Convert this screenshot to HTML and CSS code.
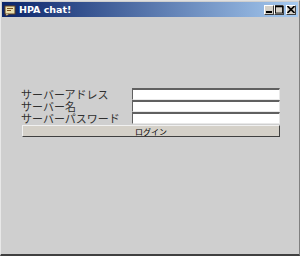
FILE: index.html
```html
<!DOCTYPE html>
<html lang="ja">
<head>
    <meta charset="UTF-8">
    <title>HPA chat!</title>
    <link rel="stylesheet" href="styles.css">
</head>
<body>

<div class="window">
    <div class="titlebar">
        <svg class="app-icon" width="12" height="12" viewBox="0 0 12 12">
            <rect x="1" y="2" width="10" height="8" fill="#e8e0b0" stroke="#604020"/>
            <rect x="3" y="4" width="6" height="1" fill="#805020"/>
            <rect x="3" y="6" width="4" height="1" fill="#805020"/>
            <path d="M2 10 L2 12 L5 10" fill="#fff" stroke="#604020" stroke-width="0.8"/>
        </svg>
        <span class="title">HPA chat!</span>
        <div class="caption-buttons">
            <button class="cap-btn">
                <svg width="8" height="7" viewBox="0 0 8 7"><rect x="1" y="5" width="6" height="2" fill="#000"/></svg>
            </button>
            <button class="cap-btn">
                <svg width="9" height="9" viewBox="0 0 9 9"><rect x="0.5" y="0.5" width="8" height="8" fill="none" stroke="#000"/><rect x="0" y="0" width="9" height="2" fill="#000"/></svg>
            </button>
            <button class="cap-btn close">
                <svg width="8" height="7" viewBox="0 0 8 7"><path d="M0.5 0 L7.5 7 M7.5 0 L0.5 7" stroke="#000" stroke-width="1.6"/></svg>
            </button>
        </div>
    </div>

    <div class="content">
        <div class="login-form">
            <label class="field-label" for="address">サーバーアドレス</label>
            <input class="field" type="text" id="address">
            <label class="field-label" for="server">サーバー名</label>
            <input class="field" type="text" id="server">
            <label class="field-label" for="password">サーバーパスワード</label>
            <input class="field" type="password" id="password">
            <button class="login-button">ログイン</button>
        </div>
    </div>
</div>

</body>
</html>
```

FILE: styles.css
```css
body {
    margin: 0;
    background-color: #d0d0d0;
    font-family: "Noto Sans CJK JP", "DejaVu Sans", sans-serif;
}

.window {
    width: 300px;
    height: 256px;
    box-sizing: border-box;
    border-top: 1px solid #e0e0e0;
    border-left: 1px solid #e8e8e8;
    border-right: 1px solid #808080;
    border-bottom: 2px solid #404040;
    background-color: #cfcfcf;
    display: flex;
    flex-direction: column;
    padding: 1px;
}

.titlebar {
    height: 15px;
    background: linear-gradient(to right, #0a246a, #a6caf0);
    display: flex;
    align-items: center;
    padding: 0 2px;
}

.app-icon {
    margin-right: 3px;
}

.title {
    color: #fff;
    font-family: "DejaVu Sans", sans-serif;
    font-weight: bold;
    font-size: 9.5px;
}

.caption-buttons {
    margin-left: auto;
    display: flex;
}

.cap-btn {
    width: 10px;
    height: 10px;
    padding: 0;
    background-color: #d4d0c8;
    border: 1px solid;
    border-color: #fff #404040 #404040 #fff;
    display: flex;
    align-items: center;
    justify-content: center;
}

.cap-btn.close {
    margin-left: 2px;
}

.content {
    flex: 1;
    padding-top: 71px;
    padding-left: 19px;
}

.login-form {
    display: grid;
    grid-template-columns: 111px 148px;
    grid-auto-rows: 12px;
}

.field-label {
    font-size: 11px;
    line-height: 12px;
    color: #303030;
    white-space: nowrap;
}

.field {
    height: 12px;
    box-sizing: border-box;
    margin: 0;
    padding: 0;
    background: #fff;
    border: 1px solid;
    border-color: #606060 #e8e8e8 #e8e8e8 #606060;
    border-top-width: 2px;
}

.login-button {
    grid-column: 1 / 3;
    height: 12px;
    margin: 1px 0 0 1px;
    padding: 0;
    background-color: #d4d0c8;
    border: 1px solid;
    border-color: #f0f0f0 #404040 #404040 #f0f0f0;
    font-family: "Noto Sans CJK JP", sans-serif;
    font-size: 8px;
    line-height: 9px;
    color: #000;
}
```
